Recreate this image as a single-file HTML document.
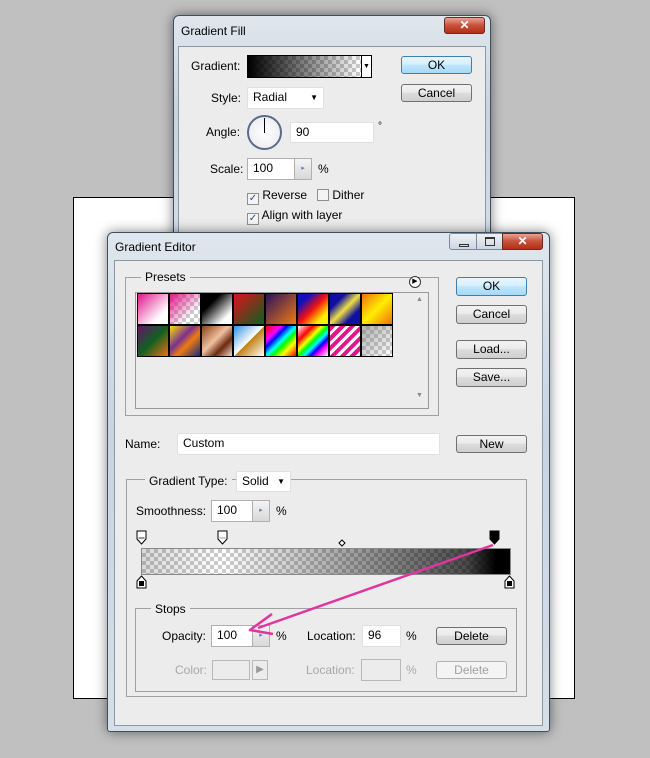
<!DOCTYPE html><html><head><style>
*{box-sizing:border-box;margin:0;padding:0}
body{width:650px;height:758px;background:#c0c0c0;position:relative;overflow:hidden;font-family:"Liberation Sans",sans-serif;font-size:12px;color:#000}
.a{position:absolute}
.win{position:absolute;background:linear-gradient(180deg,#dfe6ee,#c9d4df 40%,#d6dee7);border:1px solid #3d4f61;border-radius:6px 6px 3px 3px;box-shadow:0 0 12px rgba(0,0,0,.5)}
.client{position:absolute;background:#ececec;border:1px solid #8b98a6}
.btn{position:absolute;border:1px solid #707070;border-radius:3px;background:linear-gradient(#f2f2f2,#ebebeb 45%,#dcdcdc 50%,#cfcfcf);text-align:center;font-size:12px;line-height:16px}
.btn.d{border-color:#3c7fb1;background:linear-gradient(#e9f5fd,#d9f0fc 45%,#bee6fd 50%,#a7d9f5)}
.btn.dis{color:#a0a0a0;border-color:#adb2b5;background:#f4f4f4}
.inp{position:absolute;background:#fff;border:1px solid #e0e0e0;padding-left:5px;line-height:19px}
.grp{position:absolute;border:1px solid #a0a0a0}
.lg{position:absolute;background:#ececec;padding:0 4px}
.spin{position:absolute;width:18px;border:1px solid #b0b0b0;background:linear-gradient(#f4f4f4,#d8d8d8);color:#6080b0;font-size:7px;text-align:center}
.chk{display:inline-block;width:12px;height:12px;border:1px solid #8f8f8f;background:#f4f4f4;vertical-align:-2px;font-size:10px;line-height:10px;color:#2a4a8a;text-align:center}
.cb{background-color:#fff;background-image:linear-gradient(45deg,#ccc 25%,transparent 25%,transparent 75%,#ccc 75%),linear-gradient(45deg,#ccc 25%,transparent 25%,transparent 75%,#ccc 75%);background-size:8px 8px;background-position:0 0,4px 4px}
.sw{position:absolute;width:32px;height:32px;border:1px solid #000}
</style></head><body>
<div class="a" style="left:73px;top:197px;width:502px;height:502px;background:#fff;border:1px solid #000"></div>

<!-- Gradient Fill -->
<div class="win" style="left:173px;top:15px;width:318px;height:240px">
 <div class="a" style="left:7px;top:8px;font-size:12px">Gradient Fill</div>
 <div class="a" style="left:270px;top:1px;width:41px;height:17px;border-radius:3px;background:linear-gradient(#e8a293,#c8503a 50%,#b23018);border:1px solid #6b2a20;color:#fff;text-align:center;font-weight:bold;line-height:15px">✕</div>
 <div class="client" style="left:4px;top:30px;width:308px;height:210px"></div>
</div>
<div class="a" style="left:191px;top:59px">Gradient:</div>
<div class="a cb" style="left:247px;top:55px;width:115px;height:23px;border:1px solid #000;background-image:linear-gradient(90deg,#000,rgba(0,0,0,0)),linear-gradient(45deg,#ccc 25%,transparent 25%,transparent 75%,#ccc 75%),linear-gradient(45deg,#ccc 25%,transparent 25%,transparent 75%,#ccc 75%);background-size:100% 100%,8px 8px,8px 8px;background-position:0 0,0 0,4px 4px"></div>
<div class="a" style="left:362px;top:55px;width:10px;height:23px;border:1px solid #000;border-left:none;background:#fff;font-size:7px;text-align:center;line-height:21px">▼</div>
<div class="btn d" style="left:401px;top:56px;width:71px;height:18px">OK</div>
<div class="btn" style="left:401px;top:84px;width:71px;height:18px">Cancel</div>
<div class="a" style="left:211px;top:91px">Style:</div>
<div class="inp" style="left:247px;top:87px;width:77px;height:22px">Radial<span style="position:absolute;right:5px;font-size:8px">▼</span></div>
<div class="a" style="left:206px;top:125px">Angle:</div>
<div class="a" style="left:247px;top:115px;width:35px;height:35px;border-radius:50%;border:2px solid #5a6a88;background:radial-gradient(#fff,#e8e8ee)"></div>
<div class="a" style="left:264px;top:118px;width:1px;height:15px;background:#000"></div>
<div class="inp" style="left:290px;top:122px;width:84px;height:21px">90</div>
<div class="a" style="left:378px;top:121px;font-size:10px">°</div>
<div class="a" style="left:210px;top:162px">Scale:</div>
<div class="inp" style="left:247px;top:158px;width:48px;height:22px;border-color:#b0b0b0">100</div>
<div class="spin" style="left:294px;top:158px;height:22px;line-height:20px">▸</div>
<div class="a" style="left:318px;top:162px">%</div>
<div class="a" style="left:247px;top:188px"><span class="chk">✓</span> Reverse &nbsp;&nbsp;<span class="chk"></span> Dither</div>
<div class="a" style="left:247px;top:208px"><span class="chk">✓</span> Align with layer</div>

<!-- Gradient Editor -->
<div class="win" style="left:107px;top:232px;width:443px;height:500px">
 <div class="a" style="left:7px;top:7px">Gradient Editor</div>
 <div class="a" style="left:341px;top:0;width:28px;height:17px;border:1px solid #7a8a9a;border-radius:3px 0 0 3px;background:linear-gradient(#eef2f6,#cdd6e0)"><div class="a" style="left:9px;top:10px;width:10px;height:3px;border:1px solid #333"></div></div>
 <div class="a" style="left:368px;top:0;width:27px;height:17px;border:1px solid #7a8a9a;background:linear-gradient(#eef2f6,#cdd6e0)"><div class="a" style="left:8px;top:3px;width:10px;height:9px;border:1px solid #333;border-top-width:2px"></div></div>
 <div class="a" style="left:394px;top:0;width:41px;height:17px;border-radius:0 3px 3px 0;background:linear-gradient(#e8a293,#c8503a 50%,#b23018);border:1px solid #6b2a20;color:#fff;text-align:center;font-weight:bold;line-height:15px">✕</div>
 <div class="client" style="left:6px;top:27px;width:429px;height:466px"></div>
</div>
<div class="grp" style="left:125px;top:277px;width:314px;height:139px"></div>
<div class="lg" style="left:141px;top:270px">Presets</div>
<div class="a" style="left:409px;top:276px;width:12px;height:12px;border-radius:50%;border:1px solid #333;background:#fff;font-size:7px;text-align:center;line-height:10px">▶</div>
<div class="a" style="left:135px;top:292px;width:294px;height:117px;border:1px solid #999;background:#ececec"></div>
<div class="a" style="left:416px;top:296px;font-size:7px;color:#888">▲</div>
<div class="a" style="left:416px;top:392px;font-size:7px;color:#888">▼</div>
<div class="sw" style="left:137px;top:293px;background:linear-gradient(135deg,#e0158c,#fff 75%)"></div>
<div class="sw cb" style="left:169px;top:293px;background-image:linear-gradient(135deg,#e0158c,rgba(224,21,140,0) 70%),linear-gradient(45deg,#ccc 25%,transparent 25%,transparent 75%,#ccc 75%),linear-gradient(45deg,#ccc 25%,transparent 25%,transparent 75%,#ccc 75%);background-size:100% 100%,8px 8px,8px 8px;background-position:0 0,0 0,4px 4px"></div>
<div class="sw" style="left:201px;top:293px;background:linear-gradient(135deg,#000 30%,#fff 80%)"></div>
<div class="sw" style="left:233px;top:293px;background:linear-gradient(135deg,#e0101a,#0a6020)"></div>
<div class="sw" style="left:265px;top:293px;background:linear-gradient(135deg,#2a1260,#f07a10)"></div>
<div class="sw" style="left:297px;top:293px;background:linear-gradient(135deg,#1010c0 20%,#f01010 50%,#ffee00 80%)"></div>
<div class="sw" style="left:329px;top:293px;background:linear-gradient(135deg,#1010a0 25%,#f0e040 50%,#1010a0 75%)"></div>
<div class="sw" style="left:361px;top:293px;background:linear-gradient(135deg,#f07010,#ffee00 50%,#f07010)"></div>
<div class="sw" style="left:137px;top:325px;background:linear-gradient(135deg,#6a1070,#106020 50%,#f07010)"></div>
<div class="sw" style="left:169px;top:325px;background:linear-gradient(135deg,#ffdd00,#7a3090 40%,#f07a10 60%,#102a80)"></div>
<div class="sw" style="left:201px;top:325px;background:linear-gradient(135deg,#8a4010,#f0c0a0 45%,#6a2a10 70%,#f0d8c8)"></div>
<div class="sw" style="left:233px;top:325px;background:linear-gradient(135deg,#3090e0,#fff 50%,#c08010 51%,#fff)"></div>
<div class="sw" style="left:265px;top:325px;background:linear-gradient(135deg,#f00,#f0f 25%,#00f 35%,#0ff 50%,#0f0 60%,#ff0 75%,#f00)"></div>
<div class="sw" style="left:297px;top:325px;background:linear-gradient(135deg,#fff,#f00 25%,#ff0 40%,#0f0 50%,#0ff 60%,#00f 70%,#f0f 80%,#fff)"></div>
<div class="sw" style="left:329px;top:325px;background:repeating-linear-gradient(135deg,#e0158c 0 4px,#fff 4px 7px)"></div>
<div class="sw cb" style="left:361px;top:325px;background-image:linear-gradient(135deg,rgba(120,120,120,.6),rgba(120,120,120,0)),linear-gradient(45deg,#ccc 25%,transparent 25%,transparent 75%,#ccc 75%),linear-gradient(45deg,#ccc 25%,transparent 25%,transparent 75%,#ccc 75%);background-size:100% 100%,8px 8px,8px 8px;background-position:0 0,0 0,4px 4px"></div>

<div class="btn d" style="left:456px;top:277px;width:71px;height:19px">OK</div>
<div class="btn" style="left:456px;top:305px;width:71px;height:19px">Cancel</div>
<div class="btn" style="left:456px;top:340px;width:71px;height:19px">Load...</div>
<div class="btn" style="left:456px;top:368px;width:71px;height:19px">Save...</div>

<div class="a" style="left:125px;top:437px">Name:</div>
<div class="inp" style="left:177px;top:433px;width:263px;height:22px">Custom</div>
<div class="btn" style="left:456px;top:435px;width:71px;height:18px">New</div>

<div class="grp" style="left:126px;top:479px;width:401px;height:218px"></div>
<div class="lg" style="left:145px;top:474px">Gradient Type:</div>
<div class="inp" style="left:236px;top:471px;width:55px;height:21px">Solid<span style="position:absolute;right:5px;font-size:8px">▼</span></div>
<div class="a" style="left:136px;top:504px">Smoothness:</div>
<div class="inp" style="left:211px;top:500px;width:42px;height:22px;border-color:#b0b0b0">100</div>
<div class="spin" style="left:252px;top:500px;height:22px;line-height:20px">▸</div>
<div class="a" style="left:276px;top:504px">%</div>

<svg class="a" style="left:130px;top:528px" width="390" height="70">
 <g stroke="#000" fill="#fff"><path d="M7 3h9v8l-4.5 5-4.5-5z"/><path d="M88 3h9v8l-4.5 5-4.5-5z"/><path d="M360 3h9v8l-4.5 5-4.5-5z" fill="#000"/></g>
 <rect x="8.5" y="9" width="6" height="2" fill="#999"/><rect x="89.5" y="9" width="6" height="2" fill="#ccc"/>
 <path d="M212 12l3 3-3 3-3-3z" stroke="#000" fill="#fff"/>
 <g stroke="#000" fill="#fff"><path d="M7 60v-7l4.5-5 4.5 5v7z"/><path d="M375 60v-7l4.5-5 4.5 5v7z"/></g>
 <rect x="9" y="53" width="5" height="5" fill="#000"/><rect x="377" y="53" width="5" height="5" fill="#000"/>
</svg>
<div class="a" style="left:141px;top:548px;width:370px;height:27px;border:1px solid #888;background-image:linear-gradient(90deg,rgba(0,0,0,.15),rgba(0,0,0,0) 22%,rgba(0,0,0,.7) 88%,#000 96%),linear-gradient(45deg,#ccc 25%,transparent 25%,transparent 75%,#ccc 75%),linear-gradient(45deg,#ccc 25%,transparent 25%,transparent 75%,#ccc 75%);background-color:#fff;background-size:100% 100%,8px 8px,8px 8px;background-position:0 0,0 0,4px 4px"></div>

<div class="grp" style="left:135px;top:608px;width:382px;height:84px"></div>
<div class="lg" style="left:151px;top:602px">Stops</div>
<div class="a" style="left:162px;top:629px">Opacity:</div>
<div class="inp" style="left:211px;top:625px;width:43px;height:22px;border-color:#b0b0b0">100</div>
<div class="spin" style="left:252px;top:625px;height:22px;line-height:20px">▸</div>
<div class="a" style="left:276px;top:629px">%</div>
<div class="a" style="left:307px;top:629px">Location:</div>
<div class="inp" style="left:362px;top:625px;width:39px;height:22px">96</div>
<div class="a" style="left:406px;top:629px">%</div>
<div class="btn" style="left:436px;top:627px;width:71px;height:18px">Delete</div>
<div class="a" style="left:175px;top:663px;color:#a8a8a8">Color:</div>
<div class="a" style="left:212px;top:660px;width:38px;height:20px;border:1px solid #b8b8b8"></div>
<div class="a" style="left:252px;top:660px;width:16px;height:20px;border:1px solid #b8b8b8;color:#999;font-size:10px;text-align:center;line-height:18px">▶</div>
<div class="a" style="left:306px;top:663px;color:#a8a8a8">Location:</div>
<div class="a" style="left:361px;top:659px;width:40px;height:22px;border:1px solid #b8b8b8"></div>
<div class="a" style="left:406px;top:663px;color:#a8a8a8">%</div>
<div class="btn dis" style="left:436px;top:661px;width:71px;height:18px">Delete</div>

<svg class="a" style="left:0;top:0" width="650" height="758">
 <path d="M493 545L258 628" stroke="#e0359e" stroke-width="2.5" fill="none"/>
 <path d="M272 614L250 630L273 634" stroke="#e0359e" stroke-width="2.5" fill="none" stroke-linejoin="round"/>
</svg>
</body></html>
